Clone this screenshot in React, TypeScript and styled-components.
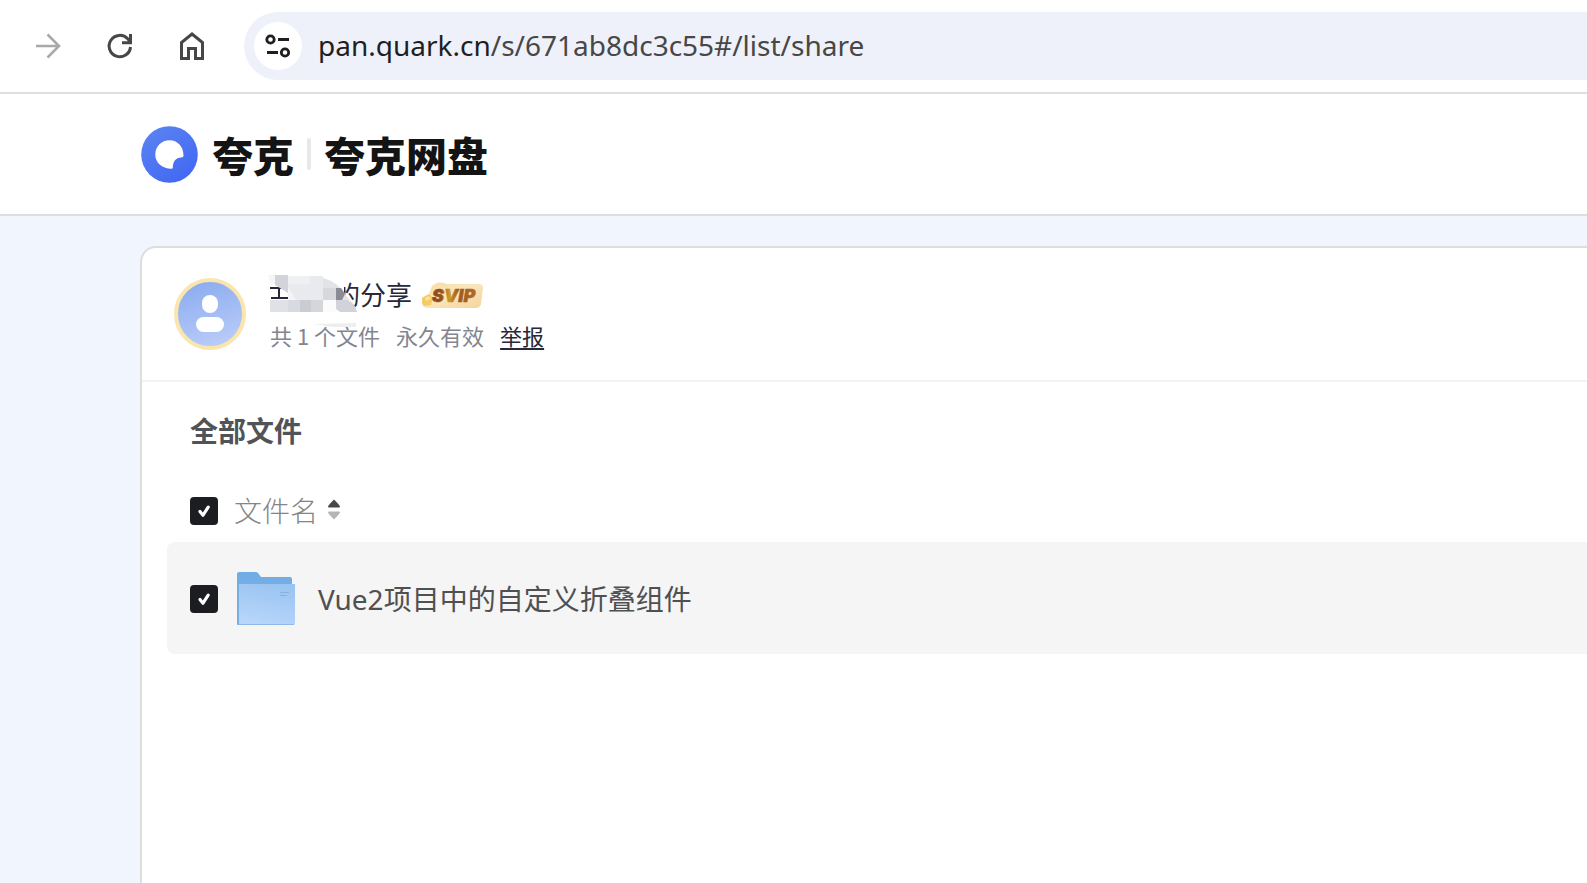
import React from "react";
import styled, { createGlobalStyle } from "styled-components";

const GlobalStyle = createGlobalStyle`
  *, *::before, *::after { box-sizing: border-box; }
  html, body, #root { height: 100%; }
  body {
    margin: 0;
    background: #fff;
    color: #222;
    font-family: "Noto Sans", "Noto Sans CJK SC", sans-serif;
    overflow: hidden;
  }
  button { border: 0; padding: 0; background: none; font: inherit; color: inherit; }
`;

const Page = styled.div`
  display: flex;
  flex-direction: column;
  min-height: 100%;
`;

const BrowserBar = styled.div`
  display: flex;
  align-items: center;
  padding: 12px 0 12px 32px;
  border-bottom: 2px solid #dedfe0;
`;

const NavButtons = styled.div`
  display: flex;
  gap: 40px;
  margin-right: 36px;
`;

const NavButton = styled.button<{ $muted?: boolean }>`
  display: flex;
  width: 32px;
  height: 32px;
  color: ${(p) => (p.$muted ? "#a9a9a9" : "#474747")};
`;

const AddressBar = styled.div`
  display: flex;
  flex: 1;
  align-items: center;
  gap: 16px;
  height: 68px;
  padding-left: 10px;
  border-radius: 34px 0 0 34px;
  background: #eef1f9;
`;

const SiteInfo = styled.button`
  display: flex;
  align-items: center;
  justify-content: center;
  width: 48px;
  height: 48px;
  border-radius: 50%;
  background: #fff;
`;

const Url = styled.span`
  padding-bottom: 2px;
  font-size: 28px;
  line-height: 40px;
  color: #474747;
`;

const Host = styled.span`
  color: #1f1f1f;
`;

const SiteHeader = styled.header`
  display: flex;
  align-items: center;
  height: 122px;
  padding-left: 141px;
  border-bottom: 2px solid #dcdddd;
`;

const Brand = styled.span`
  font-family: "Noto Sans CJK SC", sans-serif;
  font-size: 41px;
  font-weight: 900;
  line-height: 56px;
  color: #141414;
`;

const BrandLink = styled.a`
  display: flex;
  align-items: center;
  gap: 14px;
  text-decoration: none;
`;

const BrandDivider = styled.i`
  width: 4px;
  height: 32px;
  margin: 0 13px;
  border-radius: 2px;
  background: #e8e8e8;
`;

const Main = styled.main`
  display: flex;
  flex: 1;
  padding: 30px 0 0 140px;
  background: #f1f5fe;
`;

const Card = styled.section`
  flex: 1;
  border: 2px solid #dcdddd;
  border-width: 2px 0 0 2px;
  border-radius: 16px 0 0 0;
  background: #fff;
`;

const ShareInfo = styled.div`
  display: flex;
  align-items: center;
  gap: 24px;
  height: 134px;
  padding-left: 32px;
  border-bottom: 2px solid #f2f3f3;
`;

const ShareText = styled.div`
  display: flex;
  flex-direction: column;
  gap: 4px;
  padding-bottom: 2px;
`;

const OwnerLine = styled.div`
  display: flex;
  align-items: center;
  height: 40px;
  font-size: 26px;
  color: #27283a;
`;

const OwnerName = styled.span`
  position: relative;
  padding-left: 64px;
  margin-right: 8px;
  line-height: 40px;
`;

const Mosaic = styled.svg`
  position: absolute;
  left: -4px;
  top: -4px;
`;

const MetaLine = styled.div`
  display: flex;
  gap: 16px;
  font-family: "Noto Sans CJK SC", sans-serif;
  font-size: 22px;
  line-height: 32px;
  color: #84858f;
`;

const ReportLink = styled.a`
  color: #27283a;
  text-underline-offset: 3px;
`;

const Files = styled.div`
  padding: 0 0 0 25px;
`;

const Title = styled.h1`
  margin: 0;
  padding: 29px 0 0 23px;
  font-size: 28px;
  font-weight: 700;
  line-height: 40px;
  color: #505358;
`;

const Table = styled.table`
  width: 100%;
  margin-top: 29px;
  border-collapse: separate;
  border-spacing: 0;
`;

const HeadCell = styled.th`
  height: 62px;
  padding: 0 0 0 23px;
  text-align: left;
  font-size: 28px;
  font-weight: 300;
  color: #858585;
`;

const FileCell = styled.td`
  height: 112px;
  padding: 2px 0 0 23px;
  border-radius: 8px 0 0 8px;
  background: #f5f5f5;
  font-size: 28px;
  color: #505050;
`;

const CellContent = styled.div<{ $gap: number }>`
  display: flex;
  align-items: center;
  gap: ${(p) => p.$gap}px;
`;

const CheckLabel = styled.label`
  display: grid;
  width: 28px;
  height: 28px;
  & > * { grid-area: 1 / 1; }
  svg { pointer-events: none; }
`;

const CheckInput = styled.input`
  appearance: none;
  width: 28px;
  height: 28px;
  margin: 0;
  border: 2px solid #1c1d20;
  border-radius: 4px;
  background: #fff;
  &:checked { background: #1c1d20; }
`;

const SortButton = styled.button`
  display: flex;
  align-items: center;
  gap: 9px;
  line-height: 40px;
`;

const FileLink = styled.a`
  display: flex;
  align-items: center;
  gap: 22px;
  color: inherit;
  text-decoration: none;
  line-height: 40px;
`;

const SvipBadge = styled.svg`
  font: italic 900 18px "Inter", "Liberation Sans", sans-serif;
`;

function Checkbox({ label }: { label: string }) {
  return (
    <CheckLabel>
      <CheckInput type="checkbox" defaultChecked aria-label={label} />
      <svg width="28" height="28" viewBox="0 0 28 28" fill="none" stroke="#fff" strokeWidth="3.2" strokeLinecap="round" strokeLinejoin="round">
        <path d="M10 14.5l3 3.7 5.200-8" />
      </svg>
    </CheckLabel>
  );
}

function Logo() {
  return (
    <svg width="57" height="57" viewBox="0 0 57 57" aria-hidden="true">
      <defs>
        <linearGradient id="logo" x1="0" y1="0" x2=".7" y2="1">
          <stop offset="0" stopColor="#5b86f2" />
          <stop offset="1" stopColor="#4368f2" />
        </linearGradient>
      </defs>
      <circle cx="28.5" cy="28.5" r="28.3" fill="url(#logo)" />
      <path d="M42.5 29.5C42.500 20.500 36.500 14.300 28.500 14.300S14.300 20.500 14.300 28.500 20.700 42.700 30.500 42.700Q31.700 42.700 31.800 41.500C32 35.500 34.500 32 40.500 31.600Q42.500 31.500 42.500 29.500z" fill="#fff" />
    </svg>
  );
}

function Avatar() {
  return (
    <svg width="72" height="72" viewBox="0 0 72 72" aria-hidden="true">
      <defs>
        <linearGradient id="avatar" x1=".2" y1="0" x2=".5" y2="1">
          <stop offset="0" stopColor="#8aabef" />
          <stop offset="1" stopColor="#b9cbf9" />
        </linearGradient>
      </defs>
      <circle cx="36" cy="36" r="34" fill="url(#avatar)" stroke="#fae5ad" strokeWidth="4" />
      <rect x="28" y="17" width="16" height="18" rx="8" fill="#fff" />
      <rect x="22" y="39" width="28" height="15" rx="7.5" fill="#fff" />
    </svg>
  );
}

function NameMosaic() {
  return (
    <Mosaic width="94" height="58" viewBox="0 0 94 58" aria-hidden="true">
      <path d="M4 17h18M5 27h18M13 17v10" stroke="#27283a" strokeWidth="2" />
      <path d="M4 9l8 5 14 13h52V6H4z" fill="#fff" />
      <path d="M2 4h8v9H5z" fill="#f5f5f7" />
      <path d="M9 4h13v18L9 14z" fill="#d3d4d9" />
      <path d="M22 5h35v24H30l-8-8z" fill="#e9eaed" />
      <path d="M22 16l8 13h-8z" fill="#f4f4f8" />
      <path d="M22 5h22v8H22z" fill="#eff0f1" />
      <path d="M57 7q16 4 25 20l2 2H57z" fill="#e2e3e6" />
      <path d="M57 17h13v12H57z" fill="#d7d8dc" />
      <path d="M70 17h5l4 6-3 6h-6z" fill="#898b95" />
      <path d="M4 29h18v12H4z" fill="#e0e1e6" />
      <path d="M22 29h12v12H22z" fill="#d8dae2" />
      <path d="M34 29h11v12H34z" fill="#cbccd2" />
      <path d="M45 29h12v12H45z" fill="#d5d6dc" />
      <path d="M57 29h13v12H57z" fill="#fbfbfc" />
      <path d="M70 29h12q7 3 9 12H74l-4-3z" fill="#d2d3da" />
      <path d="M48 53l42-1v4H66z" fill="#eeeef0" />
    </Mosaic>
  );
}

function Svip() {
  return (
    <SvipBadge width="64" height="30" viewBox="0 0 64 30" role="img">
      <defs>
        <linearGradient id="svipBack" x1="0" y1="0" x2="1" y2="1">
          <stop offset="0" stopColor="#f7dba0" />
          <stop offset=".45" stopColor="#fae6bd" />
          <stop offset="1" stopColor="#f5d49b" />
        </linearGradient>
        <linearGradient id="svipText">
          <stop offset="0" stopColor="#8f4a16" />
          <stop offset=".22" stopColor="#96501a" />
          <stop offset=".4" stopColor="#cf9a26" />
          <stop offset=".6" stopColor="#a05a1c" />
          <stop offset="1" stopColor="#b56a2c" />
        </linearGradient>
      </defs>
      <path d="M12 6q5-5 12-3l3 1h32q4 0 4 4l-2 16q-1 4-5 4H8q-7 0-6-7l1-4 6-3z" fill="url(#svipBack)" />
      <path d="M2 18l7-4 4 4-2 7-7 1-2-3z" fill="#f4cc67" />
      <path d="M5 18l4-2 2 3-5 2z" fill="#fbe398" />
      <text x="12" y="22" fill="url(#svipText)" stroke="url(#svipText)" strokeWidth=".5">SVIP</text>
    </SvipBadge>
  );
}

function FolderIcon() {
  return (
    <svg width="60" height="56" viewBox="0 0 60 56" aria-hidden="true">
      <defs>
        <linearGradient id="folderFront" x1=".7" y1="0" x2=".4" y2="1">
          <stop offset="0" stopColor="#9ac4f1" />
          <stop offset="1" stopColor="#b7d6fa" />
        </linearGradient>
        <linearGradient id="folderBack" x1="0" y1="0" x2="0" y2="1">
          <stop offset="0" stopColor="#72ace5" />
          <stop offset="1" stopColor="#80b5ea" />
        </linearGradient>
      </defs>
      <path d="M1 3q0-2 2-2h17q1 0 2 1l3 4h29q2 0 2 2v44H3q-2 0-2-2z" fill="url(#folderBack)" />
      <path d="M2 13h57v39q0 2-2 2H3q-1 0-1-1z" fill="url(#folderFront)" />
      <path d="M1 12h2v42H2q-1 0-1-1z" fill="#79addf" />
      <path d="M3 53.500h55" stroke="#8fb9e6" />
      <path d="M44 21.500h9M44 24.500h7" stroke="#83b2e4" />
    </svg>
  );
}

export default function App() {
  return (
    <>
      <GlobalStyle />
      <Page>
        <BrowserBar>
          <NavButtons>
            <NavButton $muted aria-label="前进">
              <svg width="32" height="32" viewBox="0 0 32 32" fill="none" stroke="currentColor" strokeWidth="2.6">
                <path d="M4 16h23M15.500 4.500L27 16 15.500 27.500" />
              </svg>
            </NavButton>
            <NavButton aria-label="刷新">
              <svg width="32" height="32" viewBox="0 0 32 32" fill="none" stroke="currentColor" strokeWidth="3">
                <path d="M26.500 17a10.700 10.700 0 1 1-2.800-8.200l2.800 3.200M26.500 4v8.700H18" />
              </svg>
            </NavButton>
            <NavButton aria-label="主页">
              <svg width="32" height="32" viewBox="0 0 32 32" fill="none" stroke="currentColor" strokeWidth="3">
                <path d="M5.500 28.500V12.500L16 4l10.500 8.500v16h-7v-10h-7v10z" />
              </svg>
            </NavButton>
          </NavButtons>
          <AddressBar>
            <SiteInfo aria-label="网站信息">
              <svg width="28" height="28" viewBox="0 0 28 28" fill="none" stroke="#1f1f1f" strokeWidth="2.8">
                <circle cx="6.500" cy="7.500" r="3.700" />
                <path d="M14 7.500h11M3 20.500h11" />
                <circle cx="21" cy="20.500" r="3.700" />
              </svg>
            </SiteInfo>
            <Url><Host>pan.quark.cn</Host>/s/671ab8dc3c55#/list/share</Url>
          </AddressBar>
        </BrowserBar>

        <SiteHeader>
          <BrandLink href="#">
            <Logo />
            <Brand>夸克</Brand>
          </BrandLink>
          <BrandDivider />
          <Brand>夸克网盘</Brand>
        </SiteHeader>

        <Main>
          <Card>
            <ShareInfo>
              <Avatar />
              <ShareText>
                <OwnerLine>
                  <OwnerName>
                    的分享
                    <NameMosaic />
                  </OwnerName>
                  <Svip />
                </OwnerLine>
                <MetaLine>
                  <span>共 1 个文件</span>
                  <span>永久有效</span>
                  <ReportLink href="#">举报</ReportLink>
                </MetaLine>
              </ShareText>
            </ShareInfo>
            <Files>
              <Title>全部文件</Title>
              <Table>
                <thead>
                  <tr>
                    <HeadCell scope="col">
                      <CellContent $gap={16}>
                        <Checkbox label="全选" />
                        <SortButton>
                          文件名
                          <svg width="14" height="24" viewBox="0 0 14 24">
                            <path d="M1 7.500q0-1 6-7 6 6 6 7 0 1-1 1H2q-1 0-1-1z" fill="#47484a" />
                            <path d="M1 13.500q0 1 6 7 6-6 6-7 0-1-1-1H2q-1 0-1 1z" fill="#b5b5b5" />
                          </svg>
                        </SortButton>
                      </CellContent>
                    </HeadCell>
                  </tr>
                </thead>
                <tbody>
                  <tr>
                    <FileCell>
                      <CellContent $gap={18}>
                        <Checkbox label="选择文件夹" />
                        <FileLink href="#">
                          <FolderIcon />
                          Vue2项目中的自定义折叠组件
                        </FileLink>
                      </CellContent>
                    </FileCell>
                  </tr>
                </tbody>
              </Table>
            </Files>
          </Card>
        </Main>
      </Page>
    </>
  );
}
